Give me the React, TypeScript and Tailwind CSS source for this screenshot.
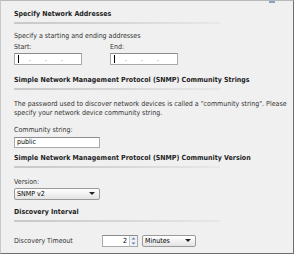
import React from 'react';

function SectionHeader({ title }: { title: string }) {
  return (
    <div className="w-[206px]">
      <p className="whitespace-nowrap text-[7px] font-bold leading-[10px] text-[#1e1e1e]">{title}</p>
      <div className="mt-[3px] h-[2px] w-full bg-gradient-to-r from-[#c8c8c8] via-[#d6d6d6] to-[#e8e8e8]" />
    </div>
  );
}

function IpBox({ className }: { className?: string }) {
  return (
    <div className={`flex h-[12px] items-center border border-[#a9a9a9] border-t-[#8c8c8c] bg-white px-[3px] text-[7px] text-[#555] ${className ?? ''}`}>
      <span className="h-[8px] w-px bg-black" />
      <span className="ml-[10px]">.</span>
      <span className="ml-[14px]">.</span>
      <span className="ml-[14px]">.</span>
    </div>
  );
}

function Select({ value, width }: { value: string; width: string }) {
  return (
    <div className={`flex h-[12px] items-center justify-between rounded-[2px] border border-[#9a9a9a] bg-gradient-to-b from-white to-[#e4e4e4] px-[2px] ${width}`}>
      <span className="text-[7px] leading-none text-black">{value}</span>
      <svg width="6" height="4" viewBox="0 0 6 4" className="mr-[2px]"><path d="M0 0h6L3 3z" fill="#222" /></svg>
    </div>
  );
}

export default function App() {
  return (
    <div
      className="h-[256px] w-[296px] overflow-hidden bg-white font-stretch-condensed"
      style={{ fontFamily: '"DejaVu Sans Condensed", "DejaVu Sans", Tahoma, sans-serif' }}
    >
      <div className="relative h-[254px] w-[294px] border border-l-[#c8c8c8] border-t-[#b8b8b8] border-r-[#6e6e6e] border-b-[#6e6e6e] bg-[#f0f0f0] pl-[13px] pt-[8px] text-[#333]">
        <div className="absolute right-[18px] top-0 h-[2px] w-[6px] bg-[#8aa2c4]" />
        <SectionHeader title="Specify Network Addresses" />
        <p className="mt-[8px] text-[7px] leading-[9px]">Specify a starting and ending addresses</p>
        <div className="mt-[2px] flex gap-[28px]">
          <div className="w-[68px]">
            <p className="text-[7px] leading-[9px]">Start:</p>
            <IpBox className="mt-[1px] w-[68px]" />
          </div>
          <div className="w-[68px]">
            <p className="text-[7px] leading-[9px]">End:</p>
            <IpBox className="mt-[1px] w-[68px]" />
          </div>
        </div>
        <div className="mt-[10px]">
          <SectionHeader title="Simple Network Management Protocol (SNMP) Community Strings" />
        </div>
        <p className="mt-[10px] w-[278px] text-[7px] leading-[9px]">
          The password used to discover network devices is called a "community string". Please specify your network device community string.
        </p>
        <p className="mt-[8px] text-[7px] leading-[9px]">Community string:</p>
        <div className="mt-[2px] flex h-[11px] w-[86px] items-center border border-[#a9a9a9] border-t-[#8c8c8c] bg-white px-[2px] text-[7px] text-black">public</div>
        <div className="mt-[5px]">
          <SectionHeader title="Simple Network Management Protocol (SNMP) Community Version" />
        </div>
        <p className="mt-[10px] text-[7px] leading-[9px]">Version:</p>
        <Select value="SNMP v2" width="mt-[1px] w-[86px]" />
        <div className="mt-[7px]">
          <SectionHeader title="Discovery Interval" />
        </div>
        <div className="mt-[13px] flex items-center">
          <p className="w-[88px] text-[7px] leading-[9px]">Discovery Timeout</p>
          <div className="flex h-[12px] w-[36px] items-center border border-[#a9a9a9] border-t-[#8c8c8c] bg-white">
            <span className="flex-1 pr-[2px] text-right text-[7px] text-black">2</span>
            <div className="flex h-full w-[8px] flex-col border-l border-[#c8c8c8] bg-[#eef2f6]">
              <svg width="7" height="5" viewBox="0 0 7 5"><path d="M1.5 3.5L3.5 1.5L5.5 3.5z" fill="#5a7aa8" /></svg>
              <svg width="7" height="5" viewBox="0 0 7 5"><path d="M1.5 1.5L3.5 3.5L5.5 1.5z" fill="#5a7aa8" /></svg>
            </div>
          </div>
          <Select value="Minutes" width="ml-[4px] w-[54px]" />
        </div>
      </div>
    </div>
  );
}
